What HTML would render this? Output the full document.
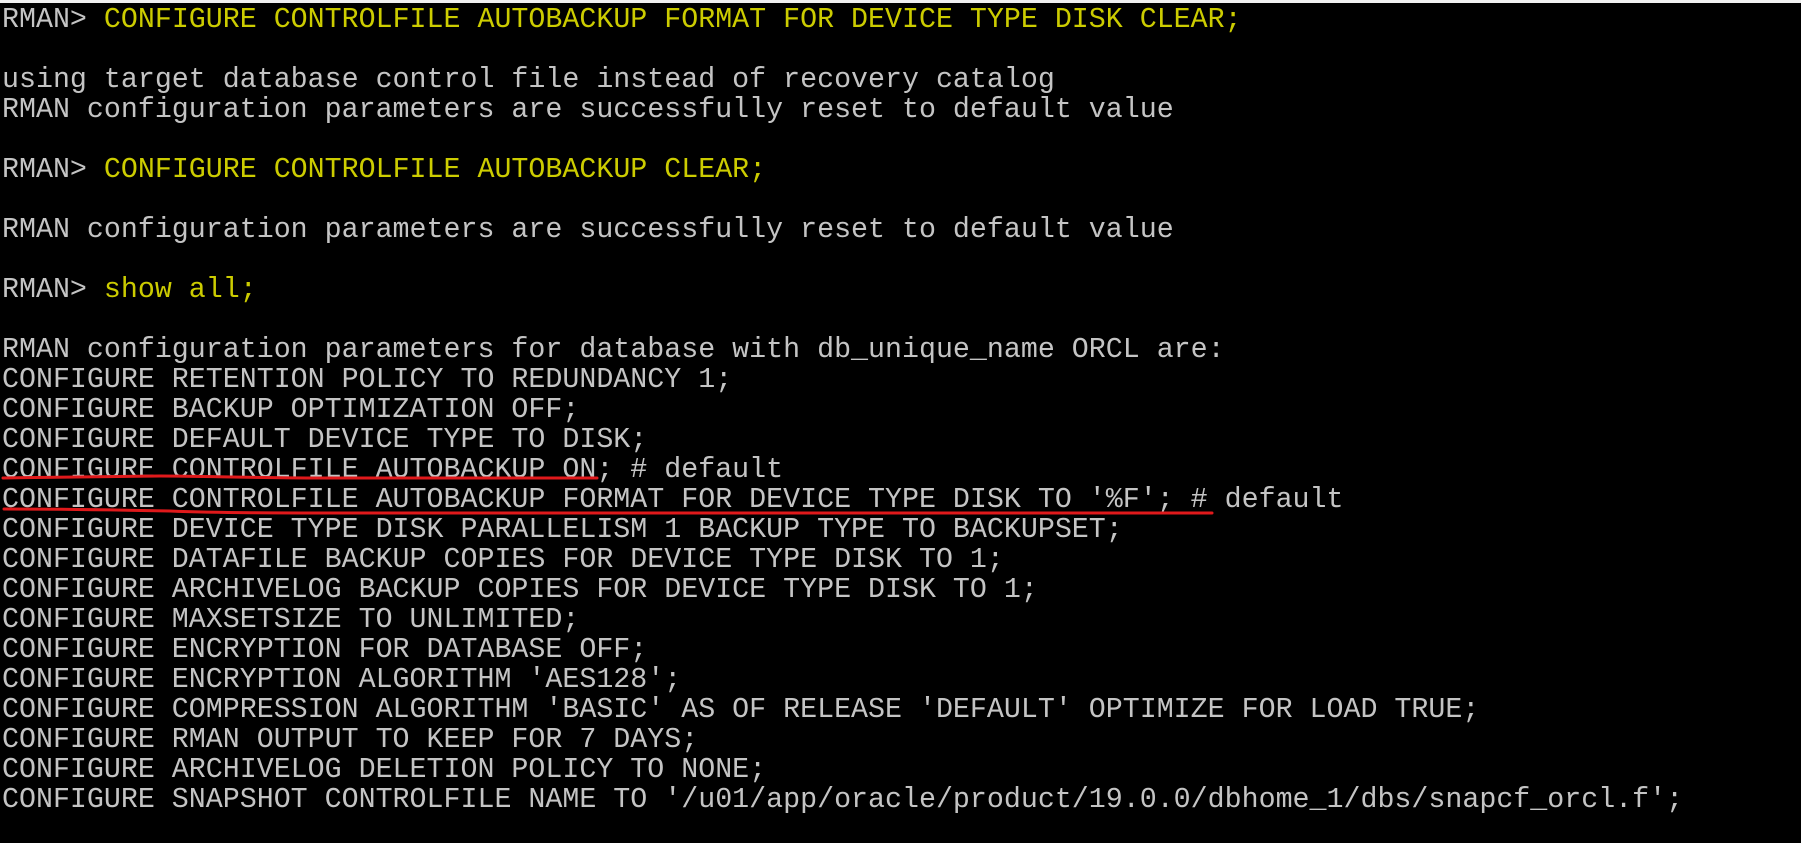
<!DOCTYPE html>
<html><head><meta charset="utf-8"><style>
html,body{margin:0;padding:0;}
body{width:1801px;height:843px;background:#000;position:relative;overflow:hidden;}
.top{position:absolute;left:0;top:0;width:1801px;height:3px;background:#f0f0f0;}
pre{position:absolute;left:2px;top:5px;margin:0;font-family:"Liberation Mono",monospace;font-size:28.3px;line-height:30px;color:#c4c4c4;white-space:pre;}
.y{color:#cccc00;}
svg{position:absolute;left:0;top:0;}
</style></head><body>
<div class="top"></div>
<pre>RMAN&gt; <span class="y">CONFIGURE CONTROLFILE AUTOBACKUP FORMAT FOR DEVICE TYPE DISK CLEAR;</span>

using target database control file instead of recovery catalog
RMAN configuration parameters are successfully reset to default value

RMAN&gt; <span class="y">CONFIGURE CONTROLFILE AUTOBACKUP CLEAR;</span>

RMAN configuration parameters are successfully reset to default value

RMAN&gt; <span class="y">show all;</span>

RMAN configuration parameters for database with db_unique_name ORCL are:
CONFIGURE RETENTION POLICY TO REDUNDANCY 1;
CONFIGURE BACKUP OPTIMIZATION OFF;
CONFIGURE DEFAULT DEVICE TYPE TO DISK;
CONFIGURE CONTROLFILE AUTOBACKUP ON; # default
CONFIGURE CONTROLFILE AUTOBACKUP FORMAT FOR DEVICE TYPE DISK TO '%F'; # default
CONFIGURE DEVICE TYPE DISK PARALLELISM 1 BACKUP TYPE TO BACKUPSET;
CONFIGURE DATAFILE BACKUP COPIES FOR DEVICE TYPE DISK TO 1;
CONFIGURE ARCHIVELOG BACKUP COPIES FOR DEVICE TYPE DISK TO 1;
CONFIGURE MAXSETSIZE TO UNLIMITED;
CONFIGURE ENCRYPTION FOR DATABASE OFF;
CONFIGURE ENCRYPTION ALGORITHM 'AES128';
CONFIGURE COMPRESSION ALGORITHM 'BASIC' AS OF RELEASE 'DEFAULT' OPTIMIZE FOR LOAD TRUE;
CONFIGURE RMAN OUTPUT TO KEEP FOR 7 DAYS;
CONFIGURE ARCHIVELOG DELETION POLICY TO NONE;
CONFIGURE SNAPSHOT CONTROLFILE NAME TO '/u01/app/oracle/product/19.0.0/dbhome_1/dbs/snapcf_orcl.f';</pre>
<svg width="1801" height="843" viewBox="0 0 1801 843">
<path d="M3 478 C60 477 120 477 160 476 C200 476 260 478 320 478 L597 478" stroke="#e0191b" stroke-width="3" fill="none" stroke-linecap="round"/>
<path d="M4 509 C60 509 120 510 170 511 C220 513 280 513 340 513 L1212 513" stroke="#e0191b" stroke-width="3" fill="none" stroke-linecap="round"/>
</svg>
</body></html>
